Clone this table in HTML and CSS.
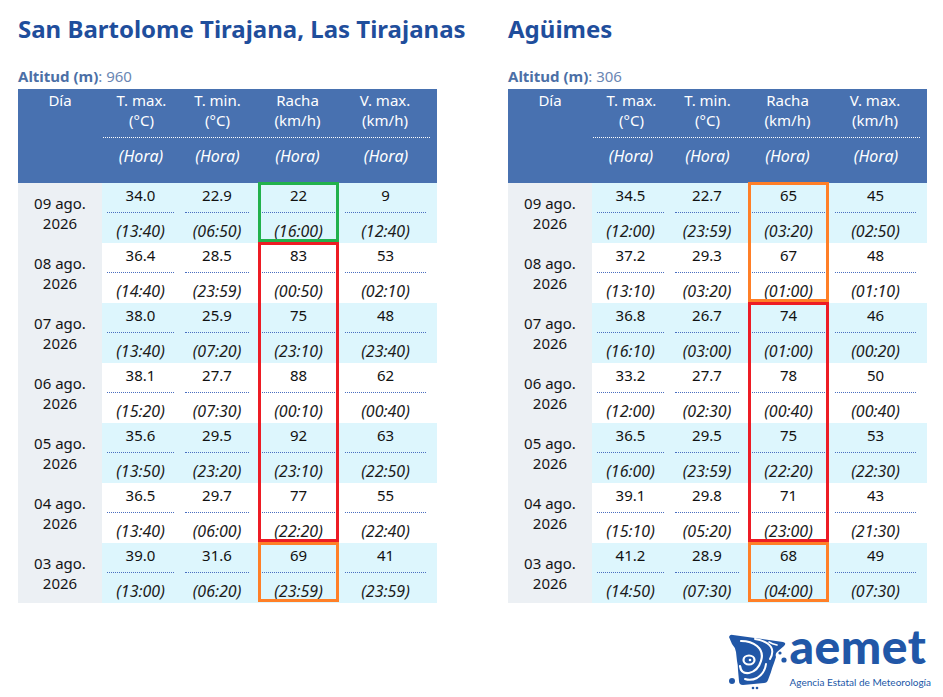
FILE: index.html
```html
<!DOCTYPE html>
<html lang="es">
<head>
<meta charset="utf-8">
<title>Rachas máximas</title>
<link rel="stylesheet" href="styles.css">
</head>
<body>
<div class="page">
  <div class="stations">
    <section class="station">
      <h1 class="title">San Bartolome Tirajana, Las Tirajanas</h1>
      <p class="alt"><span class="alt-label">Altitud (m)</span>: 960</p>
      <div class="table">
        <div class="thead">
          <div class="th-day">Día</div>
          <div class="th-cols">
            <div class="th-units">
              <div>T. max.<br>(°C)</div>
              <div>T. min.<br>(°C)</div>
              <div>Racha<br>(km/h)</div>
              <div>V. max.<br>(km/h)</div>
            </div>
            <div class="th-hora">
              <div>(Hora)</div><div>(Hora)</div><div>(Hora)</div><div>(Hora)</div>
            </div>
          </div>
        </div>
        <div class="row alt-row">
          <div class="day">09 ago.<br>2026</div>
          <div class="cell"><span class="v">34.0</span><span class="t">(13:40)</span></div>
          <div class="cell"><span class="v">22.9</span><span class="t">(06:50)</span></div>
          <div class="cell racha box-green box-top box-bot"><span class="v">22</span><span class="t">(16:00)</span></div>
          <div class="cell"><span class="v">9</span><span class="t">(12:40)</span></div>
        </div>
        <div class="row">
          <div class="day">08 ago.<br>2026</div>
          <div class="cell"><span class="v">36.4</span><span class="t">(14:40)</span></div>
          <div class="cell"><span class="v">28.5</span><span class="t">(23:59)</span></div>
          <div class="cell racha box-red box-top"><span class="v">83</span><span class="t">(00:50)</span></div>
          <div class="cell"><span class="v">53</span><span class="t">(02:10)</span></div>
        </div>
        <div class="row alt-row">
          <div class="day">07 ago.<br>2026</div>
          <div class="cell"><span class="v">38.0</span><span class="t">(13:40)</span></div>
          <div class="cell"><span class="v">25.9</span><span class="t">(07:20)</span></div>
          <div class="cell racha box-red"><span class="v">75</span><span class="t">(23:10)</span></div>
          <div class="cell"><span class="v">48</span><span class="t">(23:40)</span></div>
        </div>
        <div class="row">
          <div class="day">06 ago.<br>2026</div>
          <div class="cell"><span class="v">38.1</span><span class="t">(15:20)</span></div>
          <div class="cell"><span class="v">27.7</span><span class="t">(07:30)</span></div>
          <div class="cell racha box-red"><span class="v">88</span><span class="t">(00:10)</span></div>
          <div class="cell"><span class="v">62</span><span class="t">(00:40)</span></div>
        </div>
        <div class="row alt-row">
          <div class="day">05 ago.<br>2026</div>
          <div class="cell"><span class="v">35.6</span><span class="t">(13:50)</span></div>
          <div class="cell"><span class="v">29.5</span><span class="t">(23:20)</span></div>
          <div class="cell racha box-red"><span class="v">92</span><span class="t">(23:10)</span></div>
          <div class="cell"><span class="v">63</span><span class="t">(22:50)</span></div>
        </div>
        <div class="row">
          <div class="day">04 ago.<br>2026</div>
          <div class="cell"><span class="v">36.5</span><span class="t">(13:40)</span></div>
          <div class="cell"><span class="v">29.7</span><span class="t">(06:00)</span></div>
          <div class="cell racha box-red box-bot"><span class="v">77</span><span class="t">(22:20)</span></div>
          <div class="cell"><span class="v">55</span><span class="t">(22:40)</span></div>
        </div>
        <div class="row alt-row">
          <div class="day">03 ago.<br>2026</div>
          <div class="cell"><span class="v">39.0</span><span class="t">(13:00)</span></div>
          <div class="cell"><span class="v">31.6</span><span class="t">(06:20)</span></div>
          <div class="cell racha box-orange box-top box-bot"><span class="v">69</span><span class="t">(23:59)</span></div>
          <div class="cell"><span class="v">41</span><span class="t">(23:59)</span></div>
        </div>
      </div>
    </section>

    <section class="station">
      <h1 class="title">Agüimes</h1>
      <p class="alt"><span class="alt-label">Altitud (m)</span>: 306</p>
      <div class="table">
        <div class="thead">
          <div class="th-day">Día</div>
          <div class="th-cols">
            <div class="th-units">
              <div>T. max.<br>(°C)</div>
              <div>T. min.<br>(°C)</div>
              <div>Racha<br>(km/h)</div>
              <div>V. max.<br>(km/h)</div>
            </div>
            <div class="th-hora">
              <div>(Hora)</div><div>(Hora)</div><div>(Hora)</div><div>(Hora)</div>
            </div>
          </div>
        </div>
        <div class="row alt-row">
          <div class="day">09 ago.<br>2026</div>
          <div class="cell"><span class="v">34.5</span><span class="t">(12:00)</span></div>
          <div class="cell"><span class="v">22.7</span><span class="t">(23:59)</span></div>
          <div class="cell racha box-orange box-top"><span class="v">65</span><span class="t">(03:20)</span></div>
          <div class="cell"><span class="v">45</span><span class="t">(02:50)</span></div>
        </div>
        <div class="row">
          <div class="day">08 ago.<br>2026</div>
          <div class="cell"><span class="v">37.2</span><span class="t">(13:10)</span></div>
          <div class="cell"><span class="v">29.3</span><span class="t">(03:20)</span></div>
          <div class="cell racha box-orange box-bot"><span class="v">67</span><span class="t">(01:00)</span></div>
          <div class="cell"><span class="v">48</span><span class="t">(01:10)</span></div>
        </div>
        <div class="row alt-row">
          <div class="day">07 ago.<br>2026</div>
          <div class="cell"><span class="v">36.8</span><span class="t">(16:10)</span></div>
          <div class="cell"><span class="v">26.7</span><span class="t">(03:00)</span></div>
          <div class="cell racha box-red box-top"><span class="v">74</span><span class="t">(01:00)</span></div>
          <div class="cell"><span class="v">46</span><span class="t">(00:20)</span></div>
        </div>
        <div class="row">
          <div class="day">06 ago.<br>2026</div>
          <div class="cell"><span class="v">33.2</span><span class="t">(12:00)</span></div>
          <div class="cell"><span class="v">27.7</span><span class="t">(02:30)</span></div>
          <div class="cell racha box-red"><span class="v">78</span><span class="t">(00:40)</span></div>
          <div class="cell"><span class="v">50</span><span class="t">(00:40)</span></div>
        </div>
        <div class="row alt-row">
          <div class="day">05 ago.<br>2026</div>
          <div class="cell"><span class="v">36.5</span><span class="t">(16:00)</span></div>
          <div class="cell"><span class="v">29.5</span><span class="t">(23:59)</span></div>
          <div class="cell racha box-red"><span class="v">75</span><span class="t">(22:20)</span></div>
          <div class="cell"><span class="v">53</span><span class="t">(22:30)</span></div>
        </div>
        <div class="row">
          <div class="day">04 ago.<br>2026</div>
          <div class="cell"><span class="v">39.1</span><span class="t">(15:10)</span></div>
          <div class="cell"><span class="v">29.8</span><span class="t">(05:20)</span></div>
          <div class="cell racha box-red box-bot"><span class="v">71</span><span class="t">(23:00)</span></div>
          <div class="cell"><span class="v">43</span><span class="t">(21:30)</span></div>
        </div>
        <div class="row alt-row">
          <div class="day">03 ago.<br>2026</div>
          <div class="cell"><span class="v">41.2</span><span class="t">(14:50)</span></div>
          <div class="cell"><span class="v">28.9</span><span class="t">(07:30)</span></div>
          <div class="cell racha box-orange box-top box-bot"><span class="v">68</span><span class="t">(04:00)</span></div>
          <div class="cell"><span class="v">49</span><span class="t">(07:30)</span></div>
        </div>
      </div>
    </section>
  </div>

  <footer class="footer">
    <div class="logo">
      <svg class="logo-map" width="64" height="60" viewBox="0 0 64 60" aria-hidden="true">
        <path d="M3 6 Q4 3 7 4 L57 11 Q61 12 58 15 L51 21 Q49 23 50 26 L48 32 Q46 37 45 41 L42 49 Q41 52 38 52 L17 54 Q13 54 13 50 L12 39 Q12 34 11 30 L10 21 Q9 16 6 13 Z" fill="#2157a7"/>
        <path d="M15 10 Q25 10 31 15 Q38 21 35 30 Q32 40 23 42 Q15 43 14 35" fill="none" stroke="#fff" stroke-width="2.2" stroke-linecap="round"/>
        <ellipse cx="23" cy="29" rx="5.5" ry="4.5" fill="none" stroke="#fff" stroke-width="2.2"/>
        <circle cx="24" cy="29" r="1.3" fill="#fff"/>
        <path d="M29 8 Q41 10 45 16 Q48 21 44 28" fill="none" stroke="#fff" stroke-width="2" stroke-linecap="round"/>
        <path d="M40 33 Q39 42 31 47 Q25 50 19 48" fill="none" stroke="#fff" stroke-width="2" stroke-linecap="round"/>
        <path d="M51 14 Q46 13 43 11" fill="none" stroke="#fff" stroke-width="1.6" stroke-linecap="round"/>
        <circle cx="6" cy="50" r="3" fill="#2157a7"/>
        <circle cx="58" cy="29" r="2.6" fill="#2157a7"/>
        <circle cx="54" cy="22" r="1.6" fill="#2157a7"/>
        <circle cx="27" cy="57" r="1.3" fill="#2157a7"/>
        <circle cx="31" cy="57" r="1.3" fill="#2157a7"/>
      </svg>
      <div class="logo-text">
        <span class="logo-word">aemet</span>
        <span class="logo-sub">Agencia Estatal de Meteorología</span>
      </div>
    </div>
  </footer>
</div>
</body>
</html>
```

FILE: styles.css
```css
* { box-sizing: border-box; }

html, body {
  margin: 0;
  padding: 0;
  background: #ffffff;
}

body {
  font-family: "Noto Sans", "Open Sans", sans-serif;
  color: #141414;
  width: 943px;
  height: 697px;
  overflow: hidden;
}

.page {
  padding: 13px 0 0 18px;
}

.stations {
  display: flex;
  gap: 71px;
}

.station {
  width: 419px;
}

.title {
  margin: 0;
  font-size: 24px;
  line-height: 32px;
  font-weight: 700;
  color: #1f4e9c;
  white-space: nowrap;
}

.alt {
  margin: 22px 0 4px 0;
  font-size: 15px;
  line-height: 18px;
  color: #6a86b3;
}

.alt-label {
  font-weight: 700;
  color: #4b6fa6;
}

/* ---------- table ---------- */
.table {
  width: 419px;
}

.thead {
  display: flex;
  background: #4871b0;
  color: #ffffff;
  font-size: 15px;
  line-height: 20px;
  height: 94px;
}

.th-day {
  width: 84px;
  text-align: center;
  padding-top: 1px;
}

.th-cols {
  flex: 1;
  padding-right: 5px;
}

.th-units,
.th-hora {
  display: grid;
  grid-template-columns: 78px 75px 85px 92px;
  text-align: center;
}

.th-units {
  padding: 1px 0 7px 0;
  margin: 0 2px 0 1px;
  grid-template-columns: 77px 75px 85px 90px;
  border-bottom: 1px dotted #ffffff;
}

.th-hora {
  padding-top: 8px;
  font-style: italic;
  font-size: 16px;
}

.row {
  display: grid;
  grid-template-columns: 84px 78px 75px 85px 92px;
  padding-right: 5px;
  height: 60px;
  background: #ffffff;
}

.row.alt-row {
  background: #ddf6fd;
}

.day {
  background: #ecf0f4;
  text-align: center;
  font-size: 15px;
  line-height: 20px;
  padding-top: 10px;
  color: #141414;
}

.cell {
  position: relative;
  display: flex;
  flex-direction: column;
  padding: 2px 6px 0 5px;
  text-align: center;
  font-size: 15px;
  line-height: 20px;
}

.cell .v {
  display: block;
  padding-bottom: 7px;
  border-bottom: 1px dotted #4a6fc0;
  color: #111111;
}

.cell .t {
  display: block;
  margin-top: 8px;
  font-style: italic;
  font-size: 16px;
  color: #1c1c1c;
}

.cell.racha {
  padding: 2px 5px 0 7px;
}

/* highlight boxes drawn over the racha cells */
.cell.racha::after {
  content: "";
  position: absolute;
  top: 0;
  bottom: 0;
  left: 3px;
  right: 1px;
  border-left: 3px solid var(--box);
  border-right: 3px solid var(--box);
  pointer-events: none;
}

.cell.box-top::after { border-top: 3px solid var(--box); top: -1px; }
.cell.box-bot::after { border-bottom: 3px solid var(--box); bottom: 1px; }

.box-green { --box: #22b14c; }
.box-red { --box: #ed1c24; }
.box-orange { --box: #ff7f27; }

/* ---------- footer / logo ---------- */
.footer {
  display: flex;
  justify-content: flex-end;
  padding-right: 12px;
  margin-top: 23px;
}

.logo {
  display: flex;
  align-items: flex-start;
}

.logo-map {
  display: block;
  margin-top: 5px;
}

.logo-text {
  display: flex;
  flex-direction: column;
}

.logo-word {
  font-family: "Lato", "Noto Sans", sans-serif;
  font-weight: 900;
  font-size: 48px;
  line-height: 40px;
  color: #2157a7;
  letter-spacing: 0.5px;
}

.logo-sub {
  font-family: "Lato", "Noto Sans", sans-serif;
  font-size: 10px;
  line-height: 12px;
  color: #2157a7;
  margin-top: 10px;
  white-space: nowrap;
}
```
